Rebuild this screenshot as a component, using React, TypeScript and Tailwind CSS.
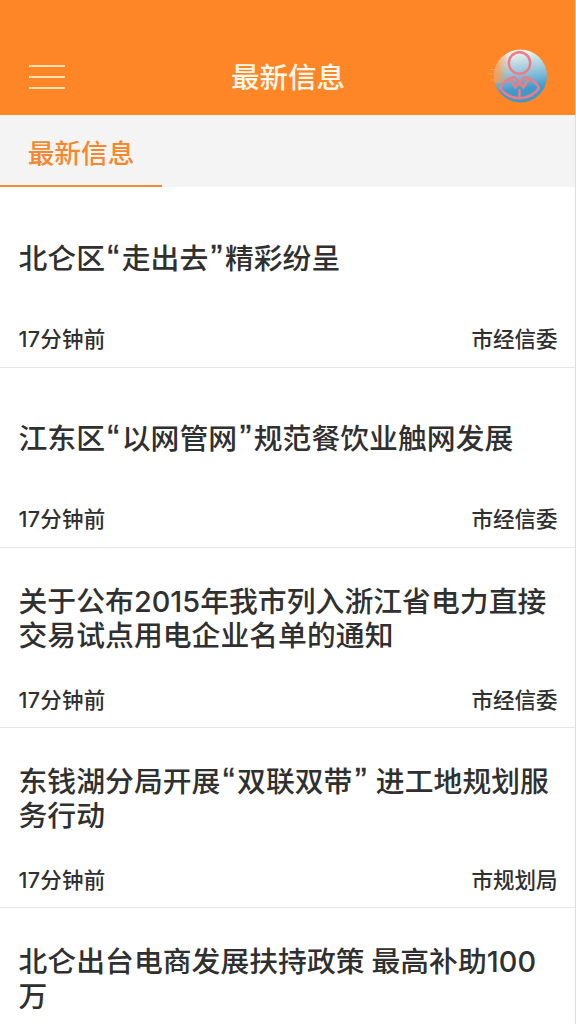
interface NewsItem {
  id: number
  title: string
  time: string
  source: string
}

const NEWS: NewsItem[] = [
  { id: 1, title: '北仑区“走出去”精彩纷呈', time: '17分钟前', source: '市经信委' },
  { id: 2, title: '江东区“以网管网”规范餐饮业触网发展', time: '17分钟前', source: '市经信委' },
  { id: 3, title: '关于公布2015年我市列入浙江省电力直接交易试点用电企业名单的通知', time: '17分钟前', source: '市经信委' },
  { id: 4, title: '东钱湖分局开展“双联双带” 进工地规划服务行动', time: '17分钟前', source: '市规划局' },
  { id: 5, title: '北仑出台电商发展扶持政策 最高补助100万', time: '17分钟前', source: '市经信委' },
]

function Avatar() {
  return (
    <svg className="w-[60px] h-[56px] -mt-px" viewBox="0 0 60 56" fill="none">
      <defs>
        <linearGradient id="sky" x1="0.4" y1="0" x2="0.55" y2="1">
          <stop offset="0.08" stopColor="#e9efec" />
          <stop offset="0.5" stopColor="#84bdd9" />
          <stop offset="0.75" stopColor="#3e9bcb" />
          <stop offset="1" stopColor="#4298c4" />
        </linearGradient>
        <linearGradient id="fade" x1="0" y1="0" x2="1" y2="0">
          <stop offset="0.1" stopColor="#ff9a45" />
          <stop offset="1" stopColor="#ff9a45" stopOpacity="0" />
        </linearGradient>
        <clipPath id="disc">
          <circle cx="33.5" cy="28" r="26.5" />
        </clipPath>
      </defs>
      <circle cx="33.5" cy="28" r="26.5" fill="url(#sky)" />
      <path d="M5 5h17v30H5z" fill="url(#fade)" clipPath="url(#disc)" />
      <path d="M3 21.500h7M1 26h6M3 32h4" stroke="#ffc692" strokeOpacity="0.35" />
      <g stroke="#ee7c86" strokeWidth="2.500" strokeLinejoin="round" strokeLinecap="round">
        <circle cx="32.5" cy="15" r="10.700" />
        <path d="M23 30.500C18.500 32.500 15 36 13 40C22.500 53.500 42.500 53.500 52 40C50 36 46.500 32.500 42 30.500" />
        <path d="M23 30.500L27.500 29L32.500 34.500L28.500 39.500ZM42 30.500L37.500 29L32.500 34.500L36.500 39.500Z" />
        <path d="M32.500 42v7" />
      </g>
    </svg>
  )
}

function Header() {
  return (
    <header className="flex items-center justify-between h-[115px] pt-[38px] pl-[29px] pr-[28px] bg-[#ff8626]">
      <button aria-label="菜单" className="flex flex-col gap-[9px] w-[60px]">
        <span className="w-9 h-0.5 bg-[#ffdfb5]" />
        <span className="w-9 h-0.5 bg-[#ffdfb5]" />
        <span className="w-9 h-0.5 bg-[#ffdfb5]" />
      </button>
      <h1 className="pt-[3px] text-[28.5px] leading-none font-medium text-[#fff8eb]">最新信息</h1>
      <Avatar />
    </header>
  )
}

// curly quotes are set in their own face, a bit wider than the default ones
function Title({ text }: { text: string }) {
  return text.split(/([“”])/).map((part, i) =>
    part === '“' || part === '”' ? (
      <span key={i} className="px-[2.300px] font-['Liberation_Sans'] font-normal text-[36px] leading-[0] align-[-2px] [-webkit-text-stroke:0.300px]">{part}</span>
    ) : (
      part
    )
  )
}

function NewsRow({ item }: { item: NewsItem }) {
  return (
    <li className="h-[180.200px] pl-[18.500px] pr-[17.500px] border-b border-[#e6e6e6]">
      <div className="flex items-center h-[142px] pt-px">
        <h2 className="w-[540px] shrink-0 text-[28.800px] leading-[34.500px] font-medium tracking-[0.050px] [word-spacing:-1px]">
          <Title text={item.title} />
        </h2>
      </div>
      <div className="flex items-center justify-between h-[21px] text-[21.500px] leading-none font-medium">
        <span className="tracking-[0.250px]">{item.time}</span>
        <span>{item.source}</span>
      </div>
    </li>
  )
}

export default function App() {
  return (
    <div className="h-[1024px] overflow-hidden bg-white border-r border-[#dedede] text-[#303030] font-['Inter','Noto_Sans_CJK_SC',sans-serif]">
      <Header />
      <nav className="flex h-[72.400px] bg-[#f4f4f4]">
        <button className="flex items-center justify-center w-[162px] pt-1 border-b-2 border-[#f58a32] text-[26.700px] leading-none font-medium text-[#f5882d]">
          <span className="pt-0.5">最新信息</span>
        </button>
      </nav>
      <ul>
        {NEWS.map((item) => (
          <NewsRow key={item.id} item={item} />
        ))}
      </ul>
    </div>
  )
}
